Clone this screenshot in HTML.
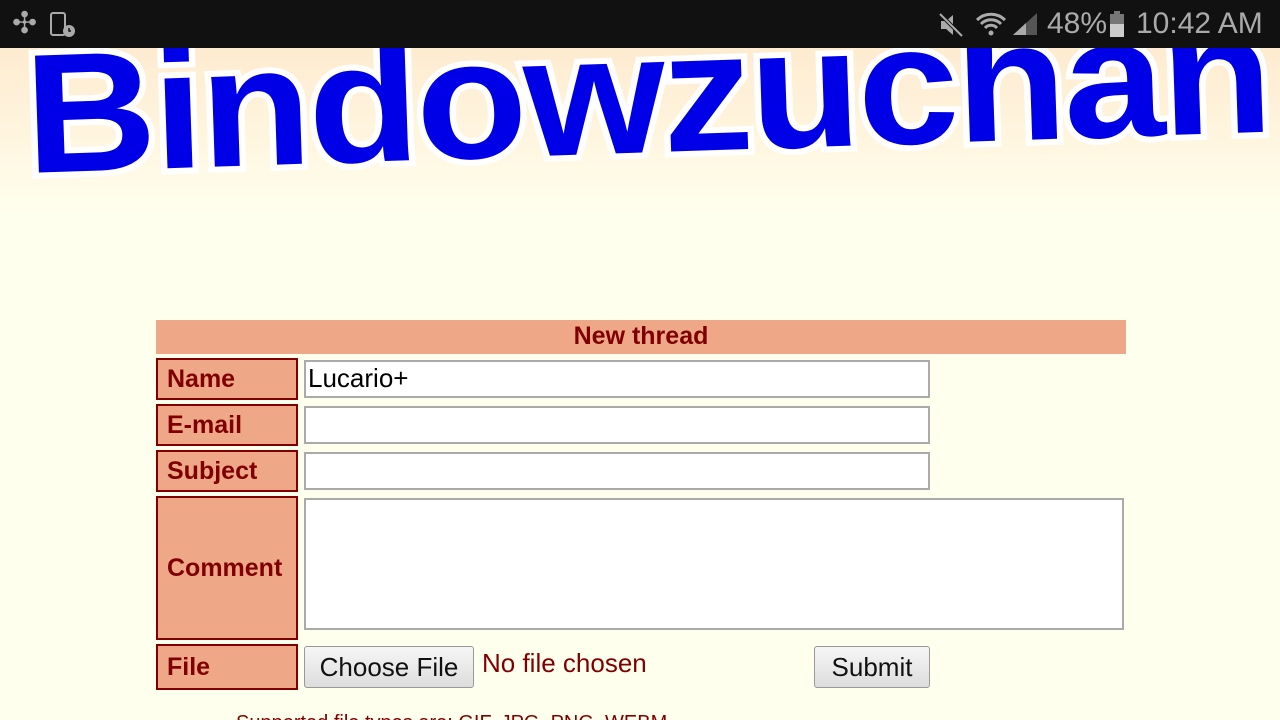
<!DOCTYPE html>
<html style="overflow:hidden;height:720px"><head><meta charset="utf-8"><style>
*{margin:0;padding:0;box-sizing:border-box}
body{width:1280px;height:720px;overflow:hidden;position:relative;font-family:"Liberation Sans",sans-serif;background:linear-gradient(#fde6c8 0px,#fff3dc 120px,#ffffee 215px,#ffffee 720px)}
.bar{position:absolute;left:0;top:0;width:1280px;height:48px;background:#111}
.st{position:absolute;color:#aaa;font-size:30px;top:7px}
.title{position:absolute;left:22px;font-size:170px;font-weight:bold;color:#0000e6;-webkit-text-stroke:12px #fff;paint-order:stroke fill;transform-origin:0 0;transform:rotate(-1.9deg) scaleX(1.07);white-space:nowrap;line-height:1;top:30px;letter-spacing:-3px}
.lab{position:absolute;left:156px;width:142px;background:#eea887;border:2px solid #800000;color:#800000;font-weight:bold;font-size:25px;padding-left:9px;display:flex;align-items:center}
.inp{position:absolute;left:304px;background:#fff;border:2px solid #aaa}
.btn{position:absolute;top:646px;height:42px;border:1px solid #999;border-radius:3px;background:linear-gradient(#f6f6f6,#ddd);font-size:26px;display:flex;align-items:center;justify-content:center;color:#111}
</style></head><body>
<div class="title">Bindowzuchan</div>
<div class="bar"></div>
<div class="st" style="left:12px;top:6px;font-size:30px">✣</div>
<svg style="position:absolute;left:50px;top:12px" width="26" height="26" viewBox="0 0 26 26"><rect x="1" y="1" width="14" height="22" rx="2" fill="none" stroke="#aaa" stroke-width="2"/><circle cx="19" cy="19" r="6" fill="#aaa"/><path d="M19 16v3h2" stroke="#111" stroke-width="1.5" fill="none"/></svg>
<svg style="position:absolute;left:938px;top:12px" width="26" height="26" viewBox="0 0 26 26"><path d="M3 9h5l7-6v20l-7-6H3z" fill="#aaa"/><path d="M2 2l22 22" stroke="#111" stroke-width="4"/><path d="M2 2l22 22" stroke="#aaa" stroke-width="2"/></svg>
<svg style="position:absolute;left:975px;top:12px" width="32" height="24" viewBox="0 0 32 24"><path d="M2 8a20 20 0 0 1 28 0M6 12a14 14 0 0 1 20 0M10 16a8 8 0 0 1 12 0" stroke="#aaa" stroke-width="3" fill="none"/><circle cx="16" cy="21" r="2.5" fill="#aaa"/></svg>
<svg style="position:absolute;left:1012px;top:12px" width="26" height="24"><path d="M1 23L25 1V23Z" fill="#555"/><path d="M1 23L14 11V23Z" fill="#aaa"/></svg>
<div class="st" style="left:1047px;font-size:30px">48%</div>
<svg style="position:absolute;left:1110px;top:11px" width="14" height="26"><rect x="4" y="0" width="6" height="3" fill="#777"/><rect x="0" y="3" width="14" height="10" fill="#777"/><rect x="0" y="13" width="14" height="13" fill="#ccc"/></svg>
<div class="st" style="left:1136px;font-size:30px">10:42 AM</div>

<div style="position:absolute;left:156px;top:320px;width:970px;height:34px;background:#eea887;color:#800000;font-weight:bold;font-size:25px;text-align:center;line-height:32px">New thread</div>
<div class="lab" style="top:358px;height:42px">Name</div>
<div class="lab" style="top:404px;height:42px">E-mail</div>
<div class="lab" style="top:450px;height:42px">Subject</div>
<div class="lab" style="top:496px;height:144px">Comment</div>
<div class="lab" style="top:644px;height:46px">File</div>
<div class="inp" style="top:360px;width:626px;height:38px;font-size:26px;padding-left:2px;line-height:32px">Lucario+</div>
<div class="inp" style="top:406px;width:626px;height:38px"></div>
<div class="inp" style="top:452px;width:626px;height:38px"></div>
<div class="inp" style="top:498px;width:820px;height:132px"></div>
<div class="btn" style="left:304px;width:170px">Choose File</div>
<div style="position:absolute;left:482px;top:648px;font-size:26px;color:#800000">No file chosen</div>
<div class="btn" style="left:814px;width:116px">Submit</div>
<div style="position:absolute;left:236px;top:711px;font-size:20px;color:#800000;white-space:nowrap;line-height:24px">Supported file types are: GIF, JPG, PNG, WEBM</div>
</body></html>
